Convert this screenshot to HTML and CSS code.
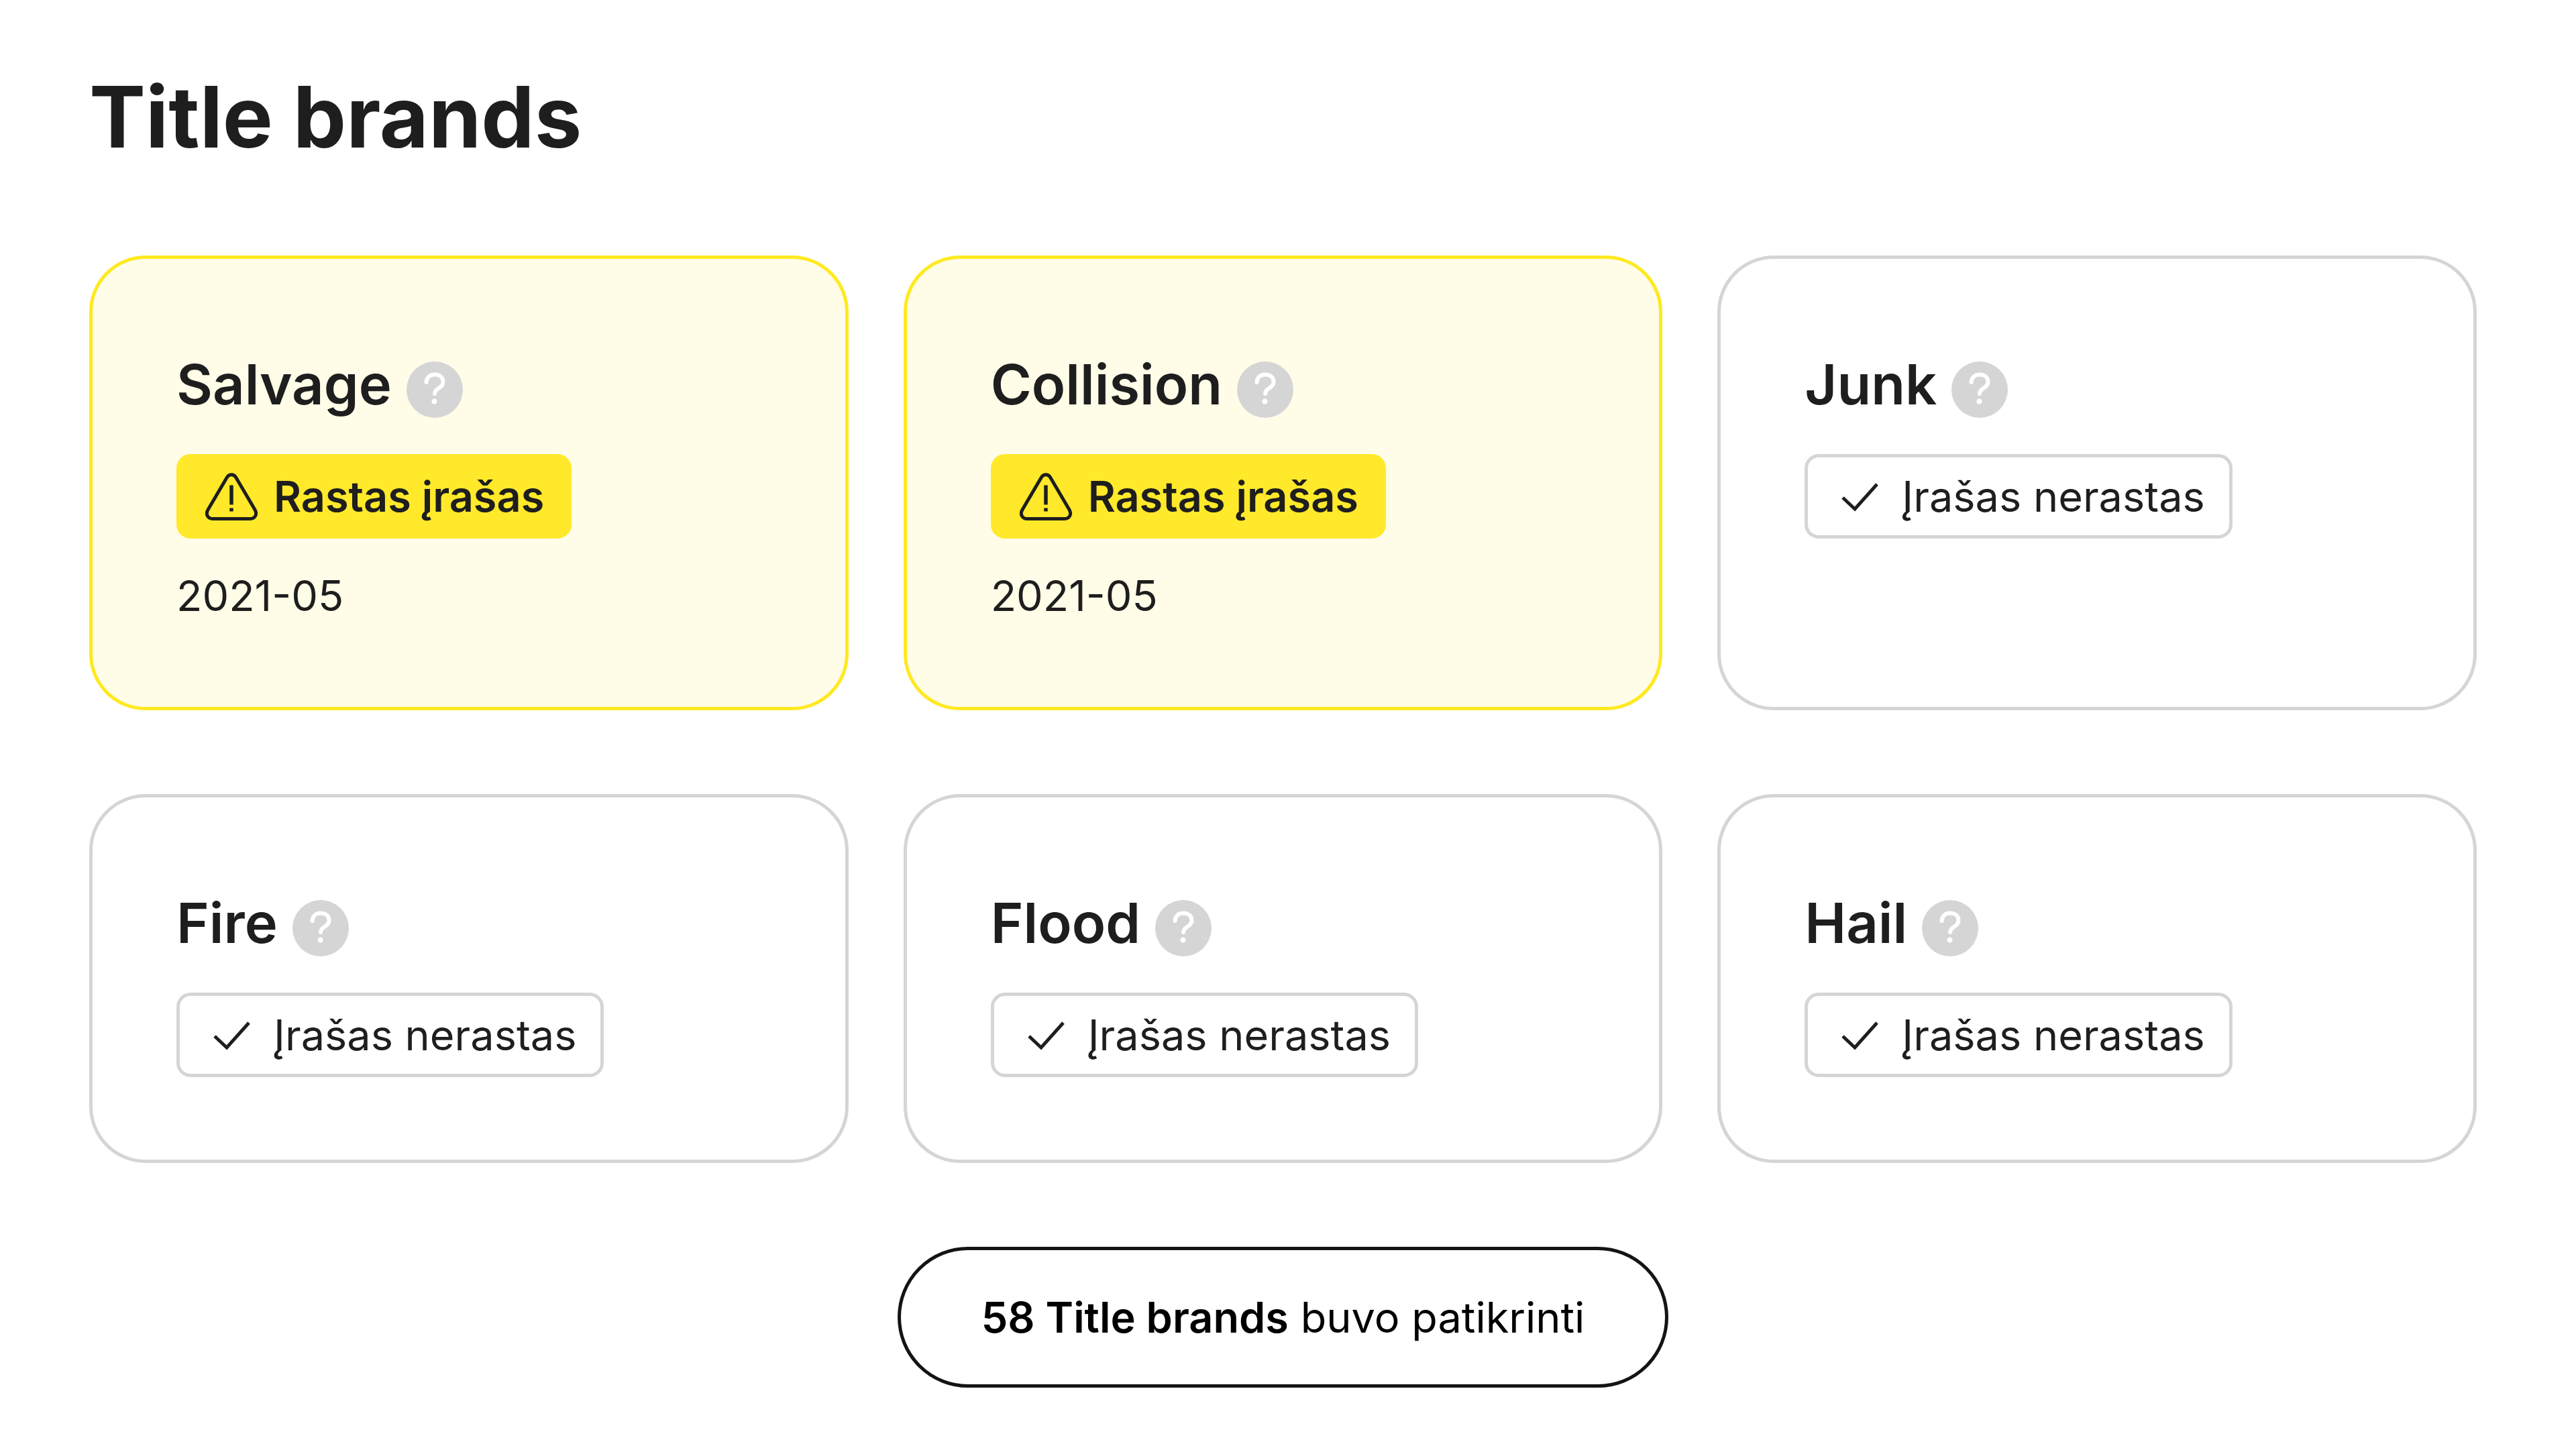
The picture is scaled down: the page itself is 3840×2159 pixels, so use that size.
FILE: index.html
```html
<!DOCTYPE html>
<html lang="lt">
<head>
<meta charset="utf-8">
<title>Title brands</title>
<meta name="viewport" content="width=device-width, initial-scale=1">
<link rel="stylesheet" href="styles.css">
</head>
<body>
<svg class="sprite" aria-hidden="true">
  <symbol id="help" viewBox="0 0 84 84"><circle cx="42" cy="42" r="42" fill="#d5d5d5"/><path d="M29.5 31C30 23.500 35 19.500 42 19.500C50 19.500 54.500 24 54.500 30.500C54.500 40 42 39.500 42 48" fill="none" stroke="#fff" stroke-width="6" stroke-linecap="round"/><circle cx="41.500" cy="59.500" r="4" fill="#fff"/></symbol>
  <symbol id="warn" viewBox="0 0 84 84"><path d="M32.500 13.500 4 62C0 69 4 75.500 11 75.500H67C74 75.500 78 69 74 62L45.500 13.500C42.500 8.500 35.500 8.500 32.500 13.500Z" fill="none" stroke="#1e1e1e" stroke-width="5"/><path d="M39 25.500v29M39 59.500v5" fill="none" stroke="#1e1e1e" stroke-width="5.500"/></symbol>
  <symbol id="check" viewBox="0 0 84 84"><path d="m14 44 18 17 33-37" fill="none" stroke="#1e1e1e" stroke-width="5"/></symbol>
</svg>
<main class="page">
  <h1 class="page-title">Title brands</h1>
  <section class="cards">
    <article class="card card-found">
      <div class="card-head"><h2 class="card-title">Salvage</h2><button class="help" type="button" aria-label="Salvage"><svg class="icon"><use href="#help"/></svg></button></div>
      <div class="badge badge-found"><svg class="icon"><use href="#warn"/></svg><span>Rastas įrašas</span></div>
      <time class="date" datetime="2021-05">2021-05</time>
    </article>
    <article class="card card-found">
      <div class="card-head"><h2 class="card-title">Collision</h2><button class="help" type="button" aria-label="Collision"><svg class="icon"><use href="#help"/></svg></button></div>
      <div class="badge badge-found"><svg class="icon"><use href="#warn"/></svg><span>Rastas įrašas</span></div>
      <time class="date" datetime="2021-05">2021-05</time>
    </article>
    <article class="card">
      <div class="card-head"><h2 class="card-title">Junk</h2><button class="help" type="button" aria-label="Junk"><svg class="icon"><use href="#help"/></svg></button></div>
      <div class="badge"><svg class="icon"><use href="#check"/></svg><span>Įrašas nerastas</span></div>
    </article>
    <article class="card">
      <div class="card-head"><h2 class="card-title">Fire</h2><button class="help" type="button" aria-label="Fire"><svg class="icon"><use href="#help"/></svg></button></div>
      <div class="badge"><svg class="icon"><use href="#check"/></svg><span>Įrašas nerastas</span></div>
    </article>
    <article class="card">
      <div class="card-head"><h2 class="card-title">Flood</h2><button class="help" type="button" aria-label="Flood"><svg class="icon"><use href="#help"/></svg></button></div>
      <div class="badge"><svg class="icon"><use href="#check"/></svg><span>Įrašas nerastas</span></div>
    </article>
    <article class="card">
      <div class="card-head"><h2 class="card-title">Hail</h2><button class="help" type="button" aria-label="Hail"><svg class="icon"><use href="#help"/></svg></button></div>
      <div class="badge"><svg class="icon"><use href="#check"/></svg><span>Įrašas nerastas</span></div>
    </article>
  </section>
  <button class="summary" type="button"><strong>58 Title brands</strong> buvo patikrinti</button>
</main>
</body>
</html>
```
FILE: styles.css
```css
* {
  box-sizing: border-box;
}

body {
  margin: 0;
  background: #fff;
  color: #1e1e1e;
  font-family: Inter, "Liberation Sans", sans-serif;
  font-size: 63px;
  line-height: 84px;
}

.sprite {
  position: absolute;
  width: 0;
  height: 0;
}

.page {
  display: flex;
  flex-direction: column;
  padding: 92px 148px 92px 133px;
}

.page-title {
  margin: 0 0 125px;
  font-size: 126px;
  font-weight: 700;
  line-height: 164px;
}

.cards {
  display: grid;
  grid-template-columns: repeat(3, 1fr);
  gap: 125px 82px;
}

.card {
  display: flex;
  flex-direction: column;
  align-items: flex-start;
  padding: 125px 125px 123px;
  border: 5px solid #d5d5d5;
  border-radius: 84px;
}

.card-found {
  border-color: #ffe920;
  background: #fffce8;
}

.card-head {
  display: flex;
  align-items: flex-end;
  gap: 22px;
  margin-bottom: 54px;
  padding-top: 20px;
}

.card-title {
  margin: 0;
  padding-bottom: 8px;
  font-size: 83px;
  font-weight: 600;
  line-height: 84px;
}

.icon {
  display: block;
  flex: none;
  width: 84px;
  height: 84px;
}

.help {
  padding: 0;
  border: 0;
  background: none;
}

.badge {
  display: flex;
  align-items: center;
  gap: 18px;
  padding: 16px 36px 16px 38px;
  border: 5px solid #d5d5d5;
  border-radius: 21px;
}

.badge-found {
  border-color: #ffe92a;
  background: #ffe92a;
  font-weight: 600;
}

.date {
  margin-top: 42px;
  line-height: 86px;
}

.summary {
  align-self: center;
  margin-top: 125px;
  padding: 58px 120px;
  border: 5px solid #141414;
  border-radius: 105px;
  background: #fff;
  color: #000;
  font: inherit;
}

.summary strong {
  font-weight: 600;
}
```
